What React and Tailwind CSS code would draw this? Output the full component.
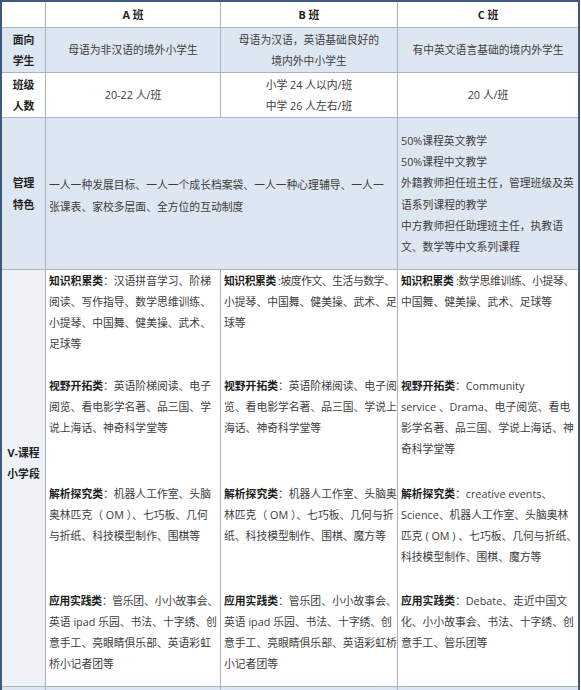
const course = {
  a: [
    { label: "知识积累类", first: "：汉语拼音学习、阶梯", rest: ["阅读、写作指导、数学思维训练、", "小提琴、中国舞、健美操、武术、", "足球等"] },
    { label: "视野开拓类", first: "：英语阶梯阅读、电子", rest: ["阅览、看电影学名著、品三国、学", "说上海话、神奇科学堂等"] },
    { label: "解析探究类", first: "：机器人工作室、头脑", rest: ["奥林匹克（ OM ）、七巧板、几何", "与折纸、科技模型制作、围棋等"] },
    { label: "应用实践类", first: "：管乐团、小小故事会、", rest: ["英语 ipad 乐园、书法、十字绣、创", "意手工、亮眼睛俱乐部、英语彩虹", "桥小记者团等"], tight: "tracking-[-0.25px]" },
  ],
  b: [
    { label: "知识积累类", first: " :坡度作文、生活与数学、", rest: ["小提琴、中国舞、健美操、武术、足", "球等"], tight: "tracking-[-0.45px]" },
    { label: "视野开拓类", first: "：英语阶梯阅读、电子阅", rest: ["览、看电影学名著、品三国、学说上", "海话、神奇科学堂等"] },
    { label: "解析探究类", first: "：机器人工作室、头脑奥", rest: ["林匹克（ OM ）、七巧板、几何与折", "纸、科技模型制作、围棋、魔方等"] },
    { label: "应用实践类", first: "：管乐团、小小故事会、", rest: ["英语 ipad 乐园、书法、十字绣、创", "意手工、亮眼睛俱乐部、英语彩虹桥", "小记者团等"] },
  ],
  c: [
    { label: "知识积累类", first: " :数学思维训练、小提琴、", rest: ["中国舞、健美操、武术、足球等"], tight: "tracking-[-0.3px]" },
    { label: "视野开拓类", first: "：Community", rest: ["service 、Drama、电子阅览、看电", "影学名著、品三国、学说上海话、神", "奇科学堂等"] },
    { label: "解析探究类", first: "：creative events、", rest: ["Science、机器人工作室、头脑奥林", "匹克 ( OM ) 、七巧板、几何与折纸、", "科技模型制作、围棋、魔方等"] },
    { label: "应用实践类", first: "：Debate、走近中国文", rest: ["化、小小故事会、书法、十字绣、创", "意手工、管乐团等"] },
  ],
};

// section heights keep the four blocks lined up across the three columns
const blockH = ["h-[105px]", "h-[108px]", "h-[107px]", ""];

const Label = ({ top, bottom, className = "" }) => (
  <div className={`bg-white flex flex-col items-center justify-center font-bold text-[#1e1e1e] ${className}`}>
    <span>{top}</span>
    <span>{bottom}</span>
  </div>
);

const CourseCell = ({ items }) => (
  <div className="bg-white pl-[3px] pt-0 text-[#3d3d3d] leading-[21px] overflow-hidden">
    {items.map((s, i) => (
      <div key={s.label} className={blockH[i]}>
        <div className={`whitespace-nowrap ${s.tight || ""}`}>
          <span className="font-bold text-[#1e1e1e]">{s.label}</span>
          {s.first}
        </div>
        {s.rest.map((l) => (
          <div key={l} className="whitespace-nowrap">
            {l}
          </div>
        ))}
      </div>
    ))}
  </div>
);

const App = () => {
  return (
    <div className="bg-white w-[581px] h-[690px] overflow-hidden">
      <div className="w-[580px] h-[690px] border-2 border-b-0 border-[#3a5a80] bg-[#aab3bf] grid grid-cols-[43px_174px_176px_180px] grid-rows-[25px_44px_44px_151px_416px_3px] gap-px text-[10.8px] leading-[21.3px] text-[#3d3d3d] font-['Open_Sans','Noto_Sans_CJK_SC',sans-serif]">
        {/* Header */}
        <div className="bg-white" />
        <div className="bg-white flex items-center justify-center font-bold text-[#1e1e1e]">A 班</div>
        <div className="bg-white flex items-center justify-center font-bold text-[#1e1e1e]">B 班</div>
        <div className="bg-white flex items-center justify-center font-bold text-[#1e1e1e]">C 班</div>

        {/* 面向学生 */}
        <Label top="面向" bottom="学生" className="!bg-[#dde7f2]" />
        <div className="bg-[#dde7f2] flex items-center justify-center">母语为非汉语的境外小学生</div>
        <div className="bg-[#dde7f2] flex flex-col items-center justify-center">
          <span>母语为汉语，英语基础良好的</span>
          <span>境内外中小学生</span>
        </div>
        <div className="bg-[#dde7f2] flex items-center justify-center">有中英文语言基础的境内外学生</div>

        {/* 班级人数 */}
        <Label top="班级" bottom="人数" />
        <div className="bg-white flex items-center justify-center">20-22 人/班</div>
        <div className="bg-white flex flex-col items-center justify-center">
          <span>小学 24 人以内/班</span>
          <span>中学 26 人左右/班</span>
        </div>
        <div className="bg-white flex items-center justify-center">20 人/班</div>

        {/* 管理特色 */}
        <Label top="管理" bottom="特色" className="!bg-[#dde7f2]" />
        <div className="col-span-2 bg-[#dde7f2] pl-[3px] flex flex-col justify-center pt-[4px]">
          <span className="whitespace-nowrap">一人一种发展目标、一人一个成长档案袋、一人一种心理辅导、一人一</span>
          <span className="whitespace-nowrap">张课表、家校多层面、全方位的互动制度</span>
        </div>
        <div className="bg-[#dde7f2] pl-[3px] flex flex-col justify-center">
          <span>50%课程英文教学</span>
          <span>50%课程中文教学</span>
          <span className="whitespace-nowrap">外籍教师担任班主任，管理班级及英</span>
          <span>语系列课程的教学</span>
          <span className="whitespace-nowrap">中方教师担任助理班主任，执教语</span>
          <span>文、数学等中文系列课程</span>
        </div>

        {/* V-课程 小学段 */}
        <Label top="V-课程" bottom="小学段" className="!bg-[#eef2f7] pb-[30px]" />
        <CourseCell items={course.a} />
        <CourseCell items={course.b} />
        <CourseCell items={course.c} />

        {/* next row, cut off by the window */}
        <div className="bg-[#dde7f2]" />
        <div className="bg-[#dde7f2]" />
        <div className="bg-[#dde7f2]" />
        <div className="bg-[#dde7f2]" />
      </div>
    </div>
  );
};

export default App;
